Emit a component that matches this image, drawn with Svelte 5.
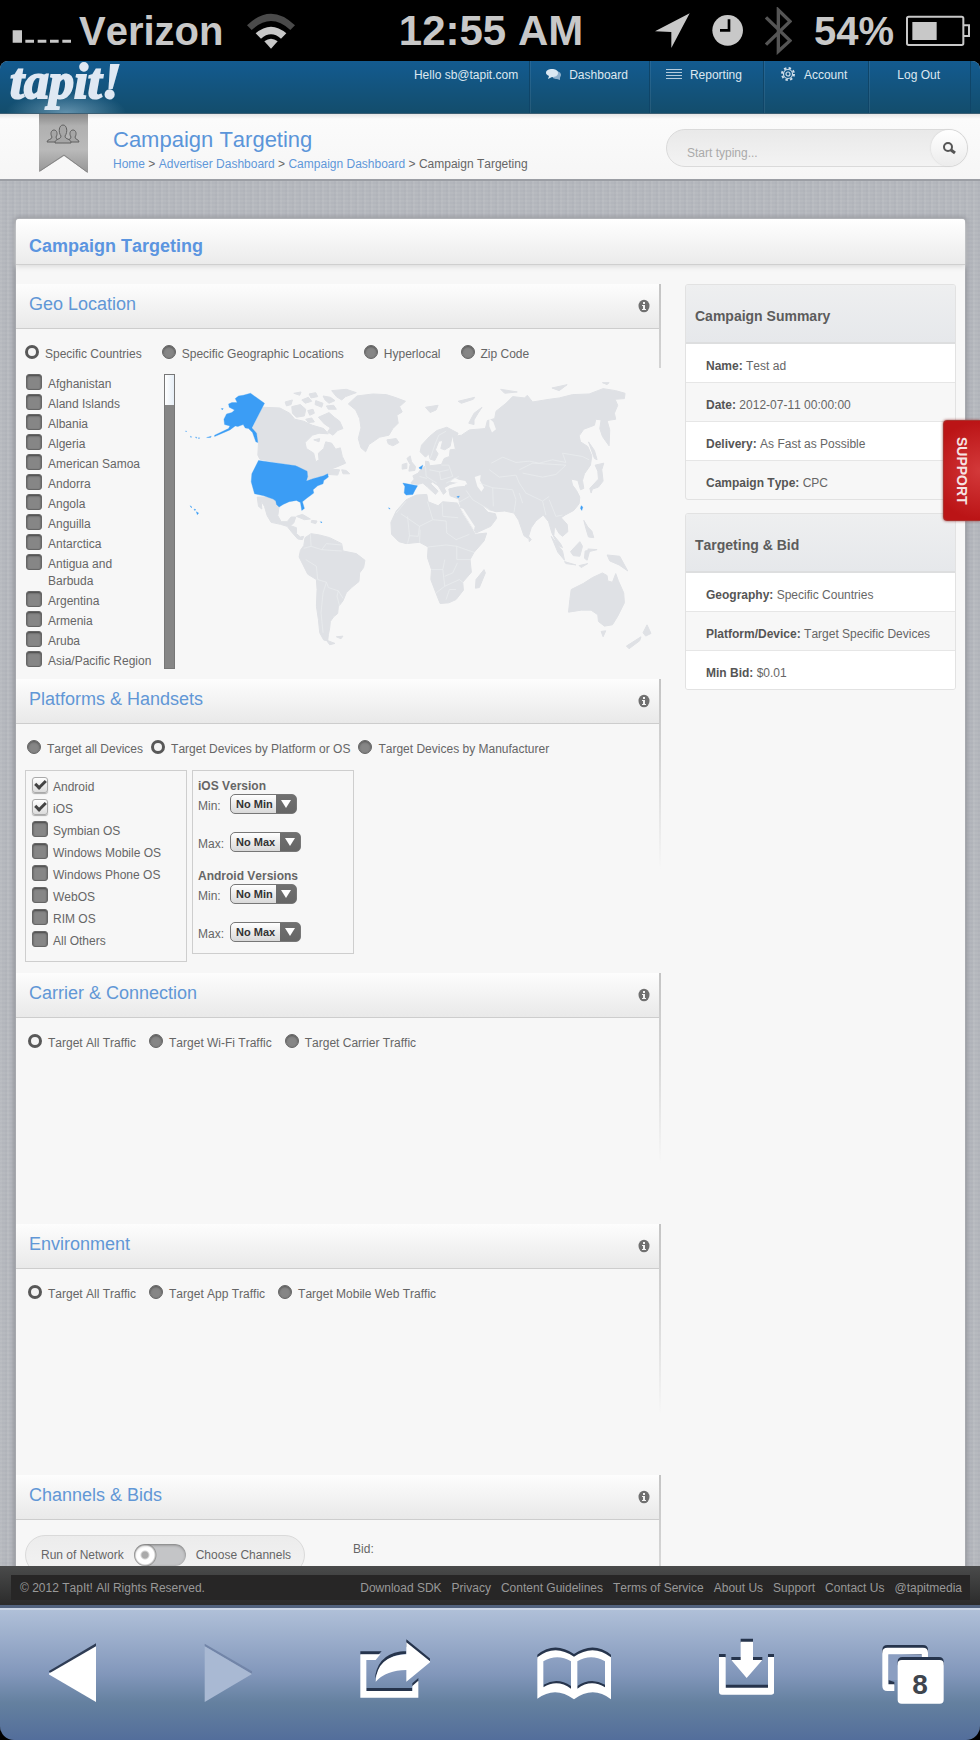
<script>
  const countries = [
    'Afghanistan', 'Aland Islands', 'Albania', 'Algeria', 'American Samoa',
    'Andorra', 'Angola', 'Anguilla', 'Antarctica', 'Antigua and Barbuda',
    'Argentina', 'Armenia', 'Aruba', 'Asia/Pacific Region'
  ];

  const geoOptions = ['Specific Countries', 'Specific Geographic Locations', 'Hyperlocal', 'Zip Code'];
  const deviceOptions = ['Target all Devices', 'Target Devices by Platform or OS', 'Target Devices by Manufacturer'];
  const carrierOptions = ['Target All Traffic', 'Target Wi-Fi Traffic', 'Target Carrier Traffic'];
  const envOptions = ['Target All Traffic', 'Target App Traffic', 'Target Mobile Web Traffic'];

  const platforms = [
    'Android', 'iOS', 'Symbian OS', 'Windows Mobile OS',
    'Windows Phone OS', 'WebOS', 'RIM OS', 'All Others'
  ];

  const versions = [
    { id: 'ios', title: 'iOS Version' },
    { id: 'android', title: 'Android Versions' }
  ];

  const summaries = [
    {
      title: 'Campaign Summary',
      rows: [
        ['Name', 'Test ad'],
        ['Date', '2012-07-11 00:00:00'],
        ['Delivery', 'As Fast as Possible'],
        ['Campaign Type', 'CPC']
      ]
    },
    {
      title: 'Targeting & Bid',
      rows: [
        ['Geography', 'Specific Countries'],
        ['Platform/Device', 'Target Specific Devices'],
        ['Min Bid', '$0.01']
      ]
    }
  ];

  const footerLinks = [
    'Download SDK', 'Privacy', 'Content Guidelines', 'Terms of Service',
    'About Us', 'Support', 'Contact Us', '@tapitmedia'
  ];

  let picked = $state({
    geo: 'Specific Countries',
    device: 'Target Devices by Platform or OS',
    carrier: 'Target All Traffic',
    env: 'Target All Traffic'
  });
  let pickedCountries = $state([]);
  let pickedPlatforms = $state(['Android', 'iOS']);
  let chooseChannels = $state(false);
  let search = $state('');

  // map shapes
  const land = [
    // canada
    'M250 142L300 144L330 160L345 178L372 184L398 196L432 206L446 222L418 220L398 226L376 248L380 266L402 280L408 306L418 300L416 280L432 266L438 246L456 250L468 268L482 264L488 290L498 310L470 322L452 328L480 330L474 346L446 344L440 346L408 352L384 362L386 342L350 318L240 298L234 286L236 246L218 206Z',
    // arctic islands
    'M336 140L362 134L378 148L374 168L350 172L338 160ZM316 126L338 120L334 134L320 138ZM384 152L400 148L404 160L390 166ZM408 122L430 130L426 142L406 134ZM416 172L448 158L464 172L480 184L490 206L474 212L460 226L444 216L452 204L434 192ZM378 178L396 174L404 186L386 188ZM430 108L452 112L466 122L448 130L436 120ZM440 138L462 136L470 148L446 148ZM456 92L500 88L530 98L498 110L486 120L470 110ZM388 102L408 98L414 110L394 114ZM342 100L364 96L360 106ZM366 120L386 112L396 124L376 130ZM402 240L420 236L418 246Z',
    // newfoundland
    'M486 330L500 332L510 342L490 342Z',
    // greenland
    'M506 132L532 108L580 102L620 104L646 112L678 124L660 140L668 156L652 166L656 190L640 206L628 226L600 232L580 246L568 254L558 276L544 264L536 236L544 204L540 176L528 150Z',
    // iceland
    'M622 240L650 236L658 248L640 258L626 252Z',
    // mexico and central america
    'M232 412L284 412L298 440L294 468L304 486L322 486L334 472L348 472L342 490L332 498L350 504L350 522L362 532L372 530L368 540L354 538L338 520L322 500L302 494L274 488L262 468L254 440L244 424L246 448L236 440Z',
    // caribbean
    'M350 470L368 464L392 478L374 480ZM396 482L412 484L408 492L394 488Z',
    // south america
    'M376 534L394 522L420 526L450 534L486 552L490 574L530 582L556 602L552 624L540 640L538 666L516 684L500 700L490 724L476 742L474 762L462 772L452 786L450 806L446 826L444 844L432 842L420 820L416 780L410 740L412 690L410 660L384 644L370 616L358 592L362 572L372 558Z',
    'M440 842L466 852L450 856ZM470 832L490 830L484 838Z',
    // british isles
    'M682 296L692 288L696 306L708 320L706 332L688 334L692 314ZM668 314L682 310L682 326L668 328Z',
    // scandinavia
    'M722 276L726 256L750 230L772 212L802 202L836 220L830 232L818 230L812 260L796 270L784 266L790 242L778 244L768 270L776 282L766 302L752 298L748 282L738 292Z',
    // continental europe
    'M700 348L716 340L724 328L738 318L738 304L748 306L750 318L786 314L794 296L810 290L812 270L828 268L820 230L846 226L870 210L918 206L924 182L946 176L950 154L980 130L1000 110L1036 114L1044 106L1060 126L1110 118L1140 114L1180 104L1230 102L1272 86L1310 92L1338 100L1336 116L1308 118L1316 136L1306 160L1310 178L1284 182L1292 210L1290 258L1270 230L1262 206L1266 180L1250 178L1246 196L1214 208L1200 228L1204 246L1226 260L1238 288L1234 316L1216 342L1210 362L1214 386L1204 390L1196 362L1176 358L1180 376L1192 392L1202 412L1200 432L1184 452L1158 466L1146 474L1164 494L1166 516L1150 530L1140 522L1126 498L1124 528L1144 552L1150 564L1136 556L1118 520L1108 486L1092 466L1070 484L1056 504L1046 536L1034 528L1018 482L1004 460L976 454L950 456L930 450L904 434L926 458L948 462L952 476L934 500L890 520L872 492L844 446L838 418L812 408L808 388L832 382L856 380L862 372L838 366L812 374L794 384L800 396L792 404L776 378L758 366L754 372L776 394L768 404L744 382L730 370L714 374L694 370L704 358Z',
    // novaya zemlya, svalbard and siberian islands
    'M868 190L884 160L908 142L896 160L884 180L884 194ZM738 142L776 136L770 150L752 158ZM836 124L886 112L882 118L846 130ZM964 88L1014 96L976 100ZM1118 84L1164 74L1140 92ZM1270 68L1290 68L1284 74Z',
    // japan and sakhalin
    'M1228 246L1246 272L1254 300L1246 296ZM1248 316L1274 310L1268 330L1272 364L1258 382L1240 388L1236 400L1232 386L1258 358L1256 334Z',
    // africa
    'M680 420L710 406L742 404L746 426L776 438L790 426L834 430L848 460L872 498L888 524L922 520L914 544L884 578L872 600L876 638L850 668L852 692L830 720L808 730L782 732L770 702L754 660L756 630L744 594L746 562L720 548L680 552L658 546L636 524L634 488L650 454Z',
    'M914 630L918 640L900 684L888 686L890 660Z',
    // sri lanka
    'M1048 530L1056 540L1050 546Z',
    // south east asia
    'M1116 530L1150 574L1156 602L1136 578ZM1156 606L1190 616L1160 612ZM1174 576L1202 546L1210 560L1202 590L1182 588ZM1218 574L1232 572L1224 602L1216 596ZM1214 482L1226 502L1238 514L1244 534L1228 532L1220 506ZM1284 586L1322 590L1346 634L1320 616L1292 604ZM1226 568L1254 570L1230 576ZM1200 618L1226 612L1206 624Z',
    // australia
    'M1176 690L1212 672L1240 654L1270 640L1284 648L1286 664L1300 668L1310 642L1318 664L1334 700L1336 730L1316 770L1300 796L1276 800L1258 786L1256 766L1236 752L1206 752L1168 758L1172 720Z',
    'M1266 816L1280 814L1272 832Z',
    // new zealand
    'M1404 796L1416 822L1400 830L1392 820ZM1342 860L1386 832L1382 844L1350 868Z'
  ];

  const borders = [
    'M392 524L394 560L426 570L440 552L486 556M394 560L372 566M378 600L410 620L414 660M426 570L450 572L486 574M414 660L440 668L446 684L476 694L490 716M440 668L430 700L424 760L430 820M476 694L472 710L480 740',
    'M680 424L650 460M664 462L720 500L760 480L744 426M720 500L716 530L690 528L684 470M760 480L800 484M788 430L790 470L836 474M800 484L802 520L830 540L870 524M684 552L690 528M720 548L722 510M746 562L800 556L832 560L832 600L872 600M756 630L790 630L796 600M790 630L796 680L770 700M796 680L840 660L850 668M832 560L860 570L884 578M796 650L820 640L834 610M800 720L810 690L830 690',
    'M936 310L970 292L1010 308L1050 304L1080 310L1120 300L1160 308L1150 280L1210 290L1230 300M1020 330L1060 310L1160 316L1130 344L1090 352L1030 340M930 330L960 352L1010 346L1020 370L1040 400L1090 424L1110 410M900 370L940 384L1000 390L1010 420L1004 458M940 384L942 440M1020 400L1030 430M1090 424L1100 466M1110 420L1130 470L1150 466',
    'M738 320L740 350L772 370M750 330L780 336L784 360L820 350L808 316M786 316L808 316M780 336L808 330M720 350L742 356M800 370L838 350M752 296L768 250L778 226L800 214M860 392L880 420L930 450M834 430L870 410'
  ];

  const highlighted = [
    // alaska
    'M166 116L176 108L190 106L212 100L254 130L216 204L230 220L234 248L228 246L218 218L206 206L196 204L190 194L174 200L166 198L150 210L104 230L104 226L146 206L150 198L134 194L132 178L140 162L156 158L164 150L148 142L146 132L156 128L172 128Z',
    // mainland
    'M236 302L348 318L382 334L384 350L380 364L402 356L432 348L444 342L446 352L432 362L430 372L414 378L400 390L402 400L380 416L368 426L374 446L366 452L362 428L350 422L328 426L310 434L298 442L290 434L288 424L280 418L252 408L224 402L214 366L216 342Z',
    // spain
    'M670 370L714 378L706 392L700 404L680 406L674 400L676 380Z',
    // netherlands, cyprus, taiwan
    'M718 324L730 316L726 328L720 326ZM832 411L840 409L837 414ZM1206 438L1211 442L1208 452L1204 446Z',
    // pacific and atlantic islands
    'M30 438L36 442L34 444ZM42 448L48 450L44 452ZM49 456L56 460L52 465ZM422 486L427 487L425 490ZM627 444L632 447L629 448ZM124 146L130 146L127 150ZM80 233L94 229L92 233ZM31 229L35 231L33 233ZM46 232L50 232L50 235ZM55 234L59 234L57 237ZM17 213L20 214L18 216Z'
  ];
</script>

{#snippet sectionHead(title)}
  <header class="section-head">
    <h3>{title}</h3>
    <button class="info" aria-label="About {title}">
      <svg width="12" height="14" viewBox="0 0 12 14">
        <ellipse cx="6" cy="7" rx="5.5" ry="6.3" fill="#707070" />
        <path d="M5 3h2v2H5zM4 6h3v4h1v1H4v-1h1V7H4z" fill="#f4f4f4" />
      </svg>
    </button>
  </header>
{/snippet}

{#snippet radios(group, options)}
  <div class="radios {group}">
    {#each options as option}
      <label class="radio">
        <input type="radio" name={group} value={option} bind:group={picked[group]}>
        <span>{option}</span>
      </label>
    {/each}
  </div>
{/snippet}

<div class="phone">
  <div class="status-bar">
    <div class="status-left">
      <svg width="59" height="36" viewBox="36 46 177 108">
        <path d="M38 98h28v37H38zM76 126h26v9H76zM113 126h26v9h-26zM150 126h26v9h-26zM187 126h26v9h-26z" fill="#c8c8c8" />
      </svg>
      <span class="carrier-name">Verizon</span>
      <svg class="wifi" width="48" height="36" viewBox="738 37 144 108">
        <path d="M738 74Q810 4 882 74L868 88Q810 34 752 88Z" fill="#4a4a4a" />
        <path d="M764 98Q810 58 856 98L840 114Q810 88 780 114Z" fill="#c8c8c8" />
        <path d="M790 122Q810 106 830 122L810 144Z" fill="#c8c8c8" />
      </svg>
    </div>
    <span class="clock">12:55 AM</span>
    <div class="status-right">
      <svg width="35" height="36" viewBox="496 37 105 108"><path d="M600 38L545 142V94L496 92Z" fill="#c8c8c8" /></svg>
      <svg width="31" height="36" viewBox="662 37 93 108">
        <circle cx="709" cy="89" r="46" fill="#c8c8c8" />
        <path d="M713 56V89H686" fill="none" stroke="#000" stroke-width="8" />
      </svg>
      <svg width="27" height="48" viewBox="821 19 81 144">
        <path d="M824 50L896 120L861 152V28L896 62L824 132" fill="none" stroke="#555" stroke-width="10" />
      </svg>
      <span class="battery">
        54%
        <svg width="64" height="32" viewBox="1251 41 192 96">
          <rect x="1254" y="46" width="169" height="85" rx="5" fill="none" stroke="#c8c8c8" stroke-width="6" />
          <path d="M1270 62h73v54h-73z" fill="#c8c8c8" />
          <path d="M1423 72h17v32h-17" fill="none" stroke="#c8c8c8" stroke-width="6" />
        </svg>
      </span>
    </div>
  </div>

  <div class="page">
    <nav class="top-nav">
      <a class="logo" href="/">tapit!</a>
      <span class="hello">Hello sb@tapit.com</span>
      <a class="nav-item" href="/dashboard">
        <svg width="15" height="16" viewBox="0 0 15 16">
          <path d="M9 4c4 0 6 2 6 4 0 1-1 2-1 3v2l-3-1c-3 0-5-1-5-4s1-4 3-4z" fill="#8fb0cc" />
          <path d="M6 2c3 0 6 1 6 4s-3 4-6 4l-4 2 1-3C1 8 0 7 0 6c0-3 3-4 6-4z" fill="#dce8f2" />
        </svg>
        Dashboard
      </a>
      <a class="nav-item" href="/reporting">
        <svg width="16" height="16" viewBox="0 0 16 16"><path d="M0 2.5h16M0 5.5h16M0 8.5h16M0 11.5h16" stroke="#b4cbdc" /></svg>
        Reporting
      </a>
      <a class="nav-item" href="/account">
        <svg width="16" height="16" viewBox="0 0 16 16" fill="none" stroke="#cfdeea">
          <circle cx="8" cy="7" r="6" stroke-width="2" stroke-dasharray="2.4 2.3" />
          <circle cx="8" cy="7" r="4.5" stroke-width="1.2" />
          <circle cx="8" cy="7" r="2" stroke-width="1.2" />
        </svg>
        Account
      </a>
      <a class="nav-item logout" href="/logout">Log Out</a>
      <span class="nav-end"></span>
    </nav>

    <header class="page-head">
      <svg class="ribbon" width="49" height="60" viewBox="0 0 49 60">
        <defs>
          <linearGradient id="ribbonFill" x1="0" y1="0" x2="0" y2="1">
            <stop offset="0" stop-color="#8a8a8a" />
            <stop offset=".2" stop-color="#b0b0b0" />
            <stop offset=".6" stop-color="#bababa" />
            <stop offset="1" stop-color="#959595" />
          </linearGradient>
        </defs>
        <path d="M0 0H49V59L25 42L0 58Z" fill="url(#ribbonFill)" />
        <path d="M1 57L25 41L48 58" fill="none" stroke="#858585" />
        <g fill="#a6a6a6" stroke="#606060">
          <path d="M8 28c0-3 5-2 5-5-2-3-1-7 2-7s4 4 2 7c0 3 3 2 4 5zM28 28c0-3 4-2 4-5-2-3-1-7 2-7s4 4 2 7c0 3 4 2 4 5z" />
          <path d="M16 29c0-5 6-3 6-7-3-4-2-11 2-11s5 7 2 11c0 4 6 2 6 7z" />
        </g>
      </svg>
      <div class="titles">
        <h1>Campaign Targeting</h1>
        <div class="crumbs">
          <a href="/">Home</a> &gt; <a href="/advertiser">Advertiser Dashboard</a> &gt;
          <a href="/campaign">Campaign Dashboard</a> &gt; Campaign Targeting
        </div>
      </div>
      <form class="search">
        <input type="text" aria-label="Search" placeholder="Start typing..." bind:value={search}>
        <button type="button" aria-label="Search">
          <svg width="14" height="14" viewBox="0 0 14 14" fill="none" stroke="#555">
            <circle cx="6" cy="6" r="4" stroke-width="2" />
            <path d="M9 9l4 3" stroke-width="3" />
          </svg>
        </button>
      </form>
    </header>

    <main class="panel">
      <header class="panel-head"><h2>Campaign Targeting</h2></header>
      <div class="columns">
        <div class="sections">
          <section class="short-edge">
            {@render sectionHead('Geo Location')}
            <div class="section-body">
              {@render radios('geo', geoOptions)}
              <div class="geo-row">
                <div class="country-list">
                  {#each countries as country}
                    <label class="country">
                      <input type="checkbox" value={country} bind:group={pickedCountries}>
                      <span>{country}</span>
                    </label>
                  {/each}
                </div>
                <div class="scroll-track"><div class="scroll-thumb"></div></div>
                <svg class="map" viewBox="0 42 1440 840" role="img" aria-label="Selected countries">
                  {#each land as d}
                    <path {d} fill="#dfe1e5" stroke="#dfe1e5" stroke-width="3" stroke-linejoin="round" />
                  {/each}
                  <!-- inland water -->
                  <path d="M886 352L904 346L902 362L914 384L906 396L894 380ZM812 366L826 354L838 360L858 364L864 374L838 370ZM930 176L942 186L950 208L938 218L930 200Z" fill="#f7f7f7" />
                  {#each borders as d}
                    <path {d} fill="none" stroke="#eceef0" stroke-width="2" stroke-linejoin="round" />
                  {/each}
                  <!-- red sea -->
                  <path d="M842 444L852 448L886 500L884 512Z" fill="#f7f7f7" />
                  {#each highlighted as d}
                    <path {d} fill="#3b9df5" stroke="#3b9df5" stroke-linejoin="round" />
                  {/each}
                </svg>
              </div>
            </div>
          </section>

          <section class="platforms">
            {@render sectionHead('Platforms & Handsets')}
            <div class="section-body">
              {@render radios('device', deviceOptions)}
              <div class="boxes">
                <div class="box platform-box">
                  {#each platforms as platform}
                    <label class="platform">
                      <input type="checkbox" value={platform} bind:group={pickedPlatforms}>
                      <span>{platform}</span>
                    </label>
                  {/each}
                </div>
                <div class="box version-box">
                  {#each versions as v}
                    <div class="version">
                      <h4>{v.title}</h4>
                      {#each ['Min', 'Max'] as bound}
                        <div class="bound">
                          <label for="{v.id}{bound}">{bound}:</label>
                          <span class="select-wrap {bound}">
                            <select id="{v.id}{bound}"><option>No {bound}</option></select>
                          </span>
                        </div>
                      {/each}
                    </div>
                  {/each}
                </div>
              </div>
            </div>
          </section>

          <section class="traffic">
            {@render sectionHead('Carrier & Connection')}
            <div class="section-body">{@render radios('carrier', carrierOptions)}</div>
          </section>

          <section class="traffic">
            {@render sectionHead('Environment')}
            <div class="section-body">{@render radios('env', envOptions)}</div>
          </section>

          <section>
            {@render sectionHead('Channels & Bids')}
            <div class="section-body channels">
              <label class="channel-switch">
                Run of Network
                <input type="checkbox" bind:checked={chooseChannels}>
                Choose Channels
              </label>
              <span class="bid">Bid:</span>
            </div>
          </section>
        </div>

        <aside>
          {#each summaries as card}
            <div class="card">
              <h4>{card.title}</h4>
              <dl>
                {#each card.rows as [name, value]}
                  <div class="fact"><dt>{name}:</dt> <dd>{value}</dd></div>
                {/each}
              </dl>
            </div>
          {/each}
        </aside>
      </div>
    </main>
  </div>

  <button class="support">SUPPORT</button>

  <footer>
    <div class="footer-bar">
      <span>© 2012 TapIt! All Rights Reserved.</span>
      <div class="footer-links">
        {#each footerLinks as link}
          <a href="/">{link}</a>
        {/each}
      </div>
    </div>
  </footer>

  <div class="toolbar-frame">
    <div class="toolbar">
      <button aria-label="Back">
        <svg width="47" height="72" viewBox="147 528 141 216">
          <path d="M288 550L145 634L200 670L288 620Z" fill="#2f3d55" />
          <path d="M288 559V726L145 642Z" fill="#fff" />
        </svg>
      </button>
      <button aria-label="Forward">
        <svg width="48" height="72" viewBox="606 528 144 216">
          <path d="M608 551L750 634V642L608 559Z" fill="#7285a8" />
          <path d="M608 559V726L750 642Z" fill="#a9b9d3" />
        </svg>
      </button>
      <button aria-label="Share">
        <svg width="70" height="72" viewBox="1085 528 210 216">
          <path d="M1086 574H1150L1140 584H1086ZM1104 684H1242V694H1104ZM1242 670L1260 654V664L1242 680Z" fill="#26344c" />
          <path d="M1086 583H1146L1132 600H1104V693H1242V678L1260 662V713H1086Z" fill="#fff" />
          <path d="M1224 538L1297 597V606L1224 560V581Q1150 585 1131 655V645Q1145 575 1224 573Z" fill="#26344c" />
          <path d="M1224 547L1297 605L1224 665V630Q1165 630 1132 665Q1135 588 1224 583Z" fill="#fff" />
        </svg>
      </button>
      <button aria-label="Bookmarks">
        <svg width="74" height="72" viewBox="147 528 222 216">
          <path d="M148 596V584Q200 542 258 582Q316 542 369 584V596Q316 554 258 596Q200 554 148 596Z" fill="#26344c" />
          <path d="M167 674Q208 650 249 678V690Q208 662 167 684ZM268 678Q309 650 351 674V684Q309 662 268 690Z" fill="#26344c" />
          <path fill-rule="evenodd" d="M148 592Q200 550 258 590Q316 550 369 592V718Q315 676 258 718Q202 676 148 716ZM166 604V682Q208 656 249 686V604Q208 580 166 604ZM268 604V686Q309 656 351 682V604Q309 580 268 604Z" fill="#fff" />
        </svg>
      </button>
      <button aria-label="Downloads">
        <svg width="55" height="72" viewBox="690 528 165 216">
          <path d="M755 536h37v12h-37zM727 591h93v10h-93zM690 582h20v12h-20zM837 582h19v12h-19zM710 674h127v10H710z" fill="#26344c" />
          <path d="M755 545h37v55h28L773 654L727 600h28zM690 591h20v92h127v-92h19v104q0 9-9 9H699q-9 0-9-9z" fill="#fff" />
        </svg>
      </button>
      <button aria-label="Tabs">
        <svg width="62" height="72" viewBox="1177 528 186 216">
          <path d="M1178 580v-10q0-15 15-15h107q15 0 15 15v15zM1196 660l18 6v10h-18z" fill="#26344c" />
          <path d="M1193 563h107q15 0 15 15v14h-19v-9h-100v90h18v20h-21q-15 0-15-15V578q0-15 15-15z" fill="#fff" />
          <path d="M1197 584h99v8h-62q-10 0-10 12v56h-27z" fill="#8b9ec1" />
          <path d="M1224 616v-11q0-14 14-14h110q14 0 14 14v11z" fill="#26344c" />
          <rect x="1224" y="600" width="138" height="131" rx="12" fill="#fff" />
          <text x="1291" y="702" text-anchor="middle">8</text>
        </svg>
      </button>
    </div>
  </div>
</div>

<style>
  :global(body) {
    background: #000;
  }

  .phone {
    position: relative;
    display: flex;
    flex-direction: column;
    height: 100vh;
    overflow: hidden;
    font-family: "Liberation Sans", Arial, sans-serif;
    font-size: 12px;
    line-height: 16px;
    font-kerning: none;
    color: #666;
    background: #000;
  }

  h1, h2, h3, h4, dl, dd {
    margin: 0;
    font-weight: normal;
  }

  button {
    padding: 0;
    border: 0;
    background: none;
    font-family: inherit;
    cursor: pointer;
  }

  a {
    color: inherit;
    text-decoration: none;
  }

  svg {
    display: block;
    flex: none;
  }

  /* phone status bar */
  .status-bar {
    display: grid;
    grid-template-columns: 1fr auto 1fr;
    align-items: center;
    flex: none;
    height: 61px;
    padding: 0 10px 0 12px;
    color: #c8c8c8;
    font-size: 40px;
    line-height: 40px;
    font-weight: bold;
  }

  .status-left,
  .status-right,
  .battery {
    display: flex;
    align-items: center;
  }

  .status-left {
    gap: 8px;
  }

  .wifi {
    margin-left: 16px;
  }

  .clock {
    font-size: 42px;
  }

  .status-right {
    justify-content: flex-end;
    gap: 22px;
  }

  .battery {
    gap: 12px;
  }

  /* web page */
  .page {
    flex: 1;
    min-height: 0;
    overflow: hidden;
    border-radius: 8px 8px 0 0;
    background-color: #b3b6bc;
    background-image:
      repeating-linear-gradient(90deg, rgba(255, 255, 255, .05) 0 2px, transparent 2px 5px, rgba(110, 115, 130, .04) 5px 7px),
      repeating-linear-gradient(0deg, rgba(255, 255, 255, .05) 0 2px, transparent 2px 4px);
  }

  .top-nav {
    display: flex;
    height: 52px;
    color: #dde8f1;
    background:
      radial-gradient(ellipse 60px 22px at 66px 52px, rgba(150, 190, 215, .6), transparent),
      linear-gradient(#135b90, #134d6c);
    border-bottom: 1px solid #3d5f74;
  }

  .logo {
    margin-left: 10px;
    margin-right: auto;
    color: #dfe8f3;
    font-family: "Liberation Serif", serif;
    font-size: 50px;
    line-height: 41px;
    font-weight: bold;
    font-style: italic;
    -webkit-text-stroke: 2px #dfe8f3;
  }

  .hello {
    padding: 6px 11px 0 0;
  }

  .nav-item {
    display: flex;
    align-items: flex-start;
    gap: 8px;
    padding: 6px 21px 0 16px;
    border-left: 1px solid #0f4568;
    box-shadow: inset 1px 0 rgba(255, 255, 255, .08);
  }

  .nav-item.logout {
    padding: 6px 30px 0 28px;
  }

  .nav-end {
    width: 9px;
    border-left: 1px solid #0f4568;
  }

  .page-head {
    display: flex;
    height: 65px;
    padding: 0 12px 0 39px;
    background: linear-gradient(#e6e6e6, #fbfbfb 5px, #f6f6f6);
    border-bottom: 2px solid #9b9ea4;
  }

  .titles {
    margin-left: 25px;
    padding-top: 12px;
  }

  h1 {
    color: #5b95d9;
    font-size: 22px;
    line-height: 27px;
  }

  .crumbs {
    padding-top: 3px;
  }

  .crumbs a {
    color: #5f97d9;
  }

  .search {
    display: flex;
    width: 300px;
    height: 36px;
    margin: 15px 0 0 auto;
    border: 1px solid #dadada;
    border-radius: 20px;
    background: linear-gradient(#e9e9e9, #f3f3f3);
  }

  .search input {
    flex: 1;
    min-width: 0;
    padding: 10px 0 0 20px;
    border: 0;
    outline: 0;
    background: none;
    color: #666;
    font-family: inherit;
    font-size: 12px;
  }

  .search input::placeholder {
    color: #aaa;
  }

  .search button {
    display: grid;
    place-items: center;
    width: 36px;
    border-radius: 50%;
    background: linear-gradient(#fff, #ececec);
    box-shadow: 0 0 2px #ccc;
  }

  /* main panel */
  .panel {
    margin: 38px 15px 0 16px;
    border-radius: 3px 3px 0 0;
    background: #f7f7f7;
    box-shadow: 0 0 0 1px #a6a8ad, 0 0 4px 2px #8f9198;
  }

  .panel-head {
    padding: 16px 13px 7px;
    border-bottom: 1px solid #cfcfcf;
    border-radius: 3px 3px 0 0;
    background: linear-gradient(#fff, #ebebeb);
    box-shadow: 0 2px 5px #ddd;
  }

  h2 {
    color: #5b95e0;
    font-size: 18px;
    line-height: 22px;
    font-weight: bold;
  }

  .columns {
    display: grid;
    grid-template-columns: minmax(0, 1fr) 271px;
    gap: 24px;
    padding: 19px 9px 20px 0;
  }

  section {
    padding-right: 2px;
    background: linear-gradient(#c4c4c4, #d4d4d4 40%, #f7f7f7) right top / 2px 190px no-repeat;
  }

  .short-edge {
    background: linear-gradient(#c4c4c4, #d4d4d4) right top / 2px 84px no-repeat;
  }

  .traffic {
    min-height: 251px;
  }

  .section-head {
    display: flex;
    align-items: center;
    justify-content: space-between;
    height: 44px;
    padding: 0 9px 0 13px;
    border-bottom: 1px solid #cdcdcd;
    background: linear-gradient(#fdfdfd, #e9e9e9);
  }

  h3 {
    padding-bottom: 4px;
    color: #6197d6;
    font-size: 18px;
    line-height: 22px;
  }

  .section-body {
    padding: 15px 0 0 9px;
  }

  .radios {
    display: flex;
    gap: 13px;
    padding-left: 3px;
  }

  .radios.geo {
    gap: 20px;
    padding-left: 0;
  }

  .radios.device {
    gap: 8px;
    padding-left: 2px;
  }

  .radio {
    display: flex;
    align-items: center;
    gap: 6px;
    white-space: nowrap;
  }

  .radio span,
  .country span,
  .platform span {
    padding-top: 2px;
    margin-bottom: -2px;
  }

  input[type="radio"],
  input[type="checkbox"] {
    appearance: none;
    flex: none;
    margin: 0;
    background: #868686;
  }

  input[type="radio"] {
    width: 14px;
    height: 14px;
    border: 1px solid #666;
    border-radius: 50%;
    box-shadow: inset 0 1px 2px #555;
  }

  input[type="radio"]:checked {
    border: 3px solid #585858;
    background: #f4f4f4;
    box-shadow: none;
  }

  .country input,
  .platform input {
    width: 16px;
    height: 16px;
    border: 1px solid #666;
    border-radius: 3px;
    box-shadow: inset 0 1px 2px #444;
  }

  .platform input:checked {
    display: grid;
    place-items: center;
    border-color: #aaa;
    background: linear-gradient(#fff, #dcdcdc);
    box-shadow: 0 1px 1px #aaa;
  }

  .platform input:checked::before {
    content: "";
    width: 11px;
    height: 7px;
    margin-bottom: 4px;
    border: solid #444;
    border-width: 0 0 3px 3px;
    box-sizing: border-box;
    transform: rotate(-45deg);
  }

  .geo-row {
    display: flex;
    padding: 14px 0 10px 1px;
  }

  .country-list {
    display: flex;
    flex-direction: column;
    gap: 3px;
    width: 126px;
  }

  .country {
    display: flex;
    gap: 6px;
    line-height: 17px;
  }

  .scroll-track {
    width: 9px;
    height: 293px;
    margin-left: 12px;
    border: 1px solid #777;
    background: #868686;
  }

  .scroll-thumb {
    height: 30px;
    background: linear-gradient(90deg, #fff, #e6eef6);
  }

  .map {
    flex: 1;
    min-width: 0;
    align-self: flex-start;
    margin-left: 5px;
  }

  .platforms {
    min-height: 294px;
  }

  .boxes {
    display: flex;
    align-items: flex-start;
    gap: 5px;
    padding-top: 15px;
  }

  .box {
    width: 162px;
    box-sizing: border-box;
    border: 1px solid #cecece;
  }

  .platform-box {
    display: grid;
    gap: 6px;
    padding: 6px 6px 14px;
  }

  .platform {
    display: flex;
    gap: 5px;
  }

  .version-box {
    display: grid;
    gap: 15px;
    padding: 6px 5px 11px;
  }

  .version h4 {
    height: 17px;
    font-weight: bold;
    line-height: 18px;
  }

  .bound {
    display: flex;
    align-items: flex-start;
    height: 20px;
  }

  .bound + .bound {
    margin-top: 18px;
  }

  .bound label {
    width: 32px;
    padding-top: 4px;
  }

  .select-wrap {
    position: relative;
    width: 67px;
  }

  .select-wrap.Max {
    width: 71px;
  }

  .select-wrap::after {
    content: "";
    position: absolute;
    top: 6px;
    right: 6px;
    border: solid transparent;
    border-width: 8px 5px 0;
    border-top-color: #fff;
    pointer-events: none;
  }

  select {
    appearance: none;
    display: block;
    width: 100%;
    height: 20px;
    padding: 0 21px 0 5px;
    border: 1px solid #777;
    border-radius: 5px;
    background:
      linear-gradient(#707070, #666) right / 20px 100% no-repeat,
      linear-gradient(#fff, #d9d9d9);
    color: #333;
    font-family: inherit;
    font-size: 11px;
    font-weight: bold;
  }

  .channels {
    display: flex;
  }

  .channel-switch {
    display: flex;
    align-items: center;
    gap: 10px;
    height: 38px;
    padding: 0 13px 0 15px;
    border: 1px solid #dadada;
    border-radius: 20px;
    background: linear-gradient(#ececec, #f3f3f3);
  }

  .channel-switch input {
    width: 52px;
    height: 22px;
    border-radius: 11px;
    background:
      radial-gradient(circle at 11px 11px, #aaa 3px, #fff 5px 9px, #999 11px, transparent 12px),
      #c4c5c7;
    box-shadow: inset 0 1px 3px #777;
  }

  .bid {
    padding: 6px 0 0 48px;
  }

  /* sidebar */
  aside {
    display: flex;
    flex-direction: column;
    gap: 13px;
  }

  .card {
    border: 1px solid #e2e2e2;
    border-radius: 3px;
    overflow: hidden;
  }

  .card h4 {
    padding: 23px 9px 17px;
    border-bottom: 2px solid #dddedf;
    background: linear-gradient(#eeeff0, #e6e8eb);
    color: #5c5c5c;
    font-size: 14px;
    line-height: 17px;
    font-weight: bold;
  }

  .fact {
    padding: 14px 20px 7px;
    border-bottom: 1px solid #e6e6e6;
    line-height: 17px;
  }

  .fact:nth-child(odd) {
    background: #fff;
  }

  .fact:last-child {
    border-bottom: 0;
  }

  dt, dd {
    display: inline;
  }

  dt {
    color: #555;
    font-weight: bold;
  }

  .support {
    position: absolute;
    top: 420px;
    right: 0;
    width: 37px;
    height: 101px;
    border: 1px solid #a8332f;
    border-right: 0;
    border-radius: 4px 0 0 4px;
    background: radial-gradient(circle at 100% 50%, #d3393a, #bb1416 80%);
    box-shadow: 0 0 3px #944;
    color: #f6e4e4;
    font-size: 14px;
    font-weight: bold;
    writing-mode: vertical-rl;
  }

  footer {
    flex: none;
    padding: 9px 10px 5px 11px;
    background: linear-gradient(#4a4b4b, #2b2b2b);
  }

  .footer-bar {
    display: flex;
    justify-content: space-between;
    padding: 5px 8px 4px 9px;
    background: #272626;
    color: #999;
  }

  .footer-links {
    display: flex;
    gap: 10px;
  }

  /* browser toolbar */
  .toolbar-frame {
    flex: none;
    background: #000;
  }

  .toolbar {
    display: flex;
    align-items: center;
    justify-content: space-between;
    box-sizing: border-box;
    height: 135px;
    padding: 0 36px 4px 49px;
    border-top: 3px solid #52637f;
    border-radius: 0 0 14px 14px;
    box-shadow: inset 0 2px #cbd6e6;
    background: linear-gradient(#b1c1d9, #8297bb 50%, #64809f 72%, #536e9b);
  }

  .toolbar text {
    fill: #3f454e;
    font-size: 84px;
    font-weight: bold;
  }
</style>
